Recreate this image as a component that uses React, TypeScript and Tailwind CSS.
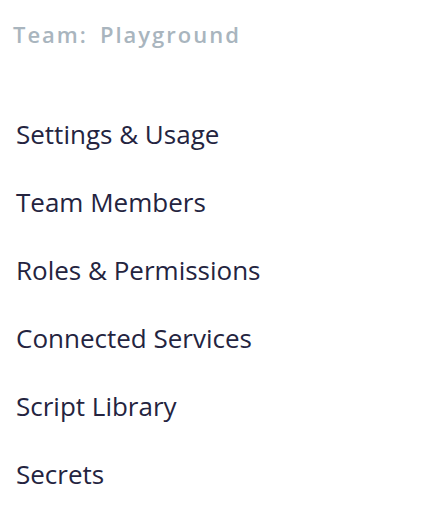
const items = [
  "Settings & Usage",
  "Team Members",
  "Roles & Permissions",
  "Connected Services",
  "Script Library",
  "Secrets",
];

export default function App() {
  return (
    <div className="min-h-screen bg-white font-['Open_Sans',sans-serif]">
      <div className="flex items-baseline gap-3 px-[13px] pt-[19px] text-[22px] leading-[30px] font-semibold tracking-[2px] text-[#a9b5be]">
        <span>Team:</span>
        <span>Playground</span>
      </div>
      <nav className="mt-[51px] flex flex-col px-4">
        {items.map((item) => (
          <a
            key={item}
            href="#"
            className="py-4 text-[26px] leading-[36px] text-[#24243f]"
          >
            {item}
          </a>
        ))}
      </nav>
    </div>
  );
}
